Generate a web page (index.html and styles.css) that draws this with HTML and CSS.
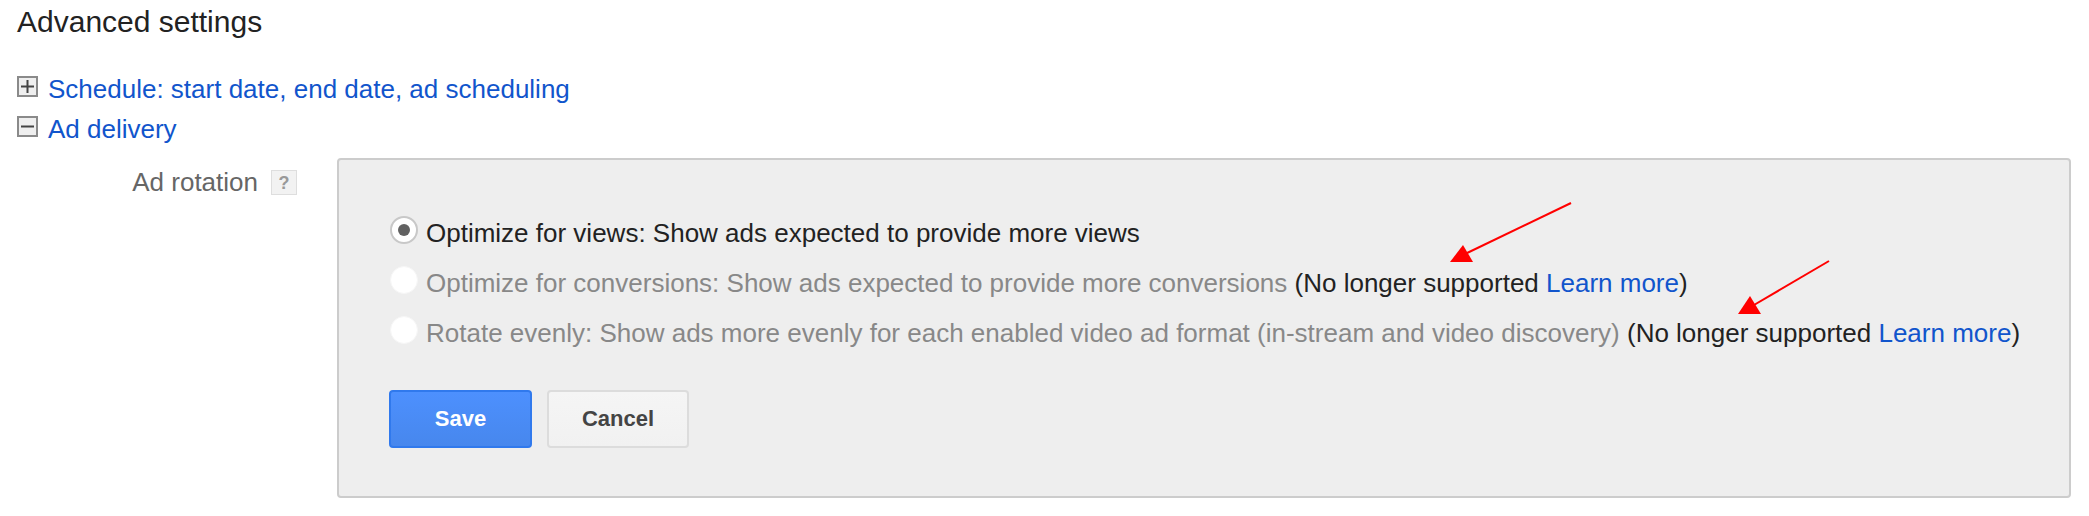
FILE: index.html
```html
<!DOCTYPE html>
<html>
<head>
<meta charset="utf-8">
<link rel="stylesheet" href="styles.css">
</head>
<body>
<div class="page">
  <h1 class="title">Advanced settings</h1>
  <div class="toggle-row">
    <span class="toggle-box"><svg width="21" height="21" viewBox="0 0 21 21"><rect x="1" y="1" width="19" height="19" fill="#efefef" stroke="#8a8a8a" stroke-width="2"/><rect x="4" y="9.5" width="13" height="2" fill="#444"/><rect x="9.5" y="4" width="2" height="13" fill="#444"/></svg></span>
    <a class="link">Schedule: start date, end date, ad scheduling</a>
  </div>
  <div class="toggle-row">
    <span class="toggle-box"><svg width="21" height="21" viewBox="0 0 21 21"><rect x="1" y="1" width="19" height="19" fill="#efefef" stroke="#8a8a8a" stroke-width="2"/><rect x="4" y="9.5" width="13" height="2" fill="#444"/></svg></span>
    <a class="link">Ad delivery</a>
  </div>
  <div class="setting">
    <div class="label-cell">
      <span class="label">Ad rotation</span>
      <span class="help">?</span>
    </div>
    <div class="panel">
      <div class="option">
        <span class="radio checked"><span class="dot"></span></span>
        <span class="opt-text">Optimize for views: Show ads expected to provide more views</span>
      </div>
      <div class="option">
        <span class="radio disabled"></span>
        <span class="opt-text muted">Optimize for conversions: Show ads expected to provide more conversions</span>&nbsp;<span class="opt-text">(No longer supported <a class="link">Learn more</a>)</span>
      </div>
      <div class="option">
        <span class="radio disabled"></span>
        <span class="opt-text muted">Rotate evenly: Show ads more evenly for each enabled video ad format (in-stream and video discovery)</span>&nbsp;<span class="opt-text">(No longer supported <a class="link">Learn more</a>)</span>
      </div>
      <div class="buttons">
        <button class="btn btn-primary">Save</button>
        <button class="btn btn-secondary">Cancel</button>
      </div>
    </div>
  </div>
  <svg class="annotations" width="2089" height="516" viewBox="0 0 2089 516">
    <line x1="1571" y1="203" x2="1465" y2="254" stroke="#ff0000" stroke-width="2"/>
    <polygon points="1450,262 1473,262 1463,245" fill="#ff0000"/>
    <line x1="1829" y1="261" x2="1754" y2="305" stroke="#ff0000" stroke-width="2"/>
    <polygon points="1738,314 1761,314 1750,296" fill="#ff0000"/>
  </svg>
</div>
</body>
</html>
```

FILE: styles.css
```css
html, body {
  margin: 0;
  padding: 0;
  background: #fff;
}

.page {
  position: relative;
  width: 2089px;
  height: 516px;
  box-sizing: border-box;
  padding: 4px 0 0 17px;
  font-family: "Liberation Sans", Arial, sans-serif;
  color: #222;
}

.title {
  margin: 0 0 29px 0;
  font-size: 30px;
  line-height: 36px;
  font-weight: normal;
  color: #222;
}

.toggle-row {
  display: flex;
  align-items: center;
  height: 40px;
  font-size: 26px;
  line-height: 40px;
}

.toggle-box {
  display: flex;
  width: 21px;
  height: 21px;
  margin-right: 10px;
  margin-bottom: 5px;
}

.link {
  color: #1155cc;
  text-decoration: none;
  cursor: pointer;
}

.setting {
  display: flex;
  margin-top: 9px;
}

.label-cell {
  width: 280px;
  display: flex;
  justify-content: flex-end;
  align-items: center;
  padding-top: 9px;
  height: 30px;
}

.label {
  font-size: 26px;
  line-height: 30px;
  color: #666;
}

.help {
  width: 24px;
  height: 23px;
  margin-left: 13px;
  border: 1px solid #dedede;
  background: #f2f2f2;
  color: #999;
  font-size: 18px;
  font-weight: bold;
  line-height: 24px;
  text-align: center;
}

.panel {
  margin-left: 40px;
  width: 1734px;
  height: 340px;
  box-sizing: border-box;
  padding: 48px 50px;
  background: #eeeeee;
  border: 2px solid #cccccc;
  border-radius: 4px;
}

.option {
  display: flex;
  align-items: center;
  height: 50px;
  font-size: 26px;
  line-height: 50px;
  white-space: nowrap;
}

.opt-text {
  color: #222;
}

.opt-text.muted {
  color: #888;
}

.radio {
  display: flex;
  align-items: center;
  justify-content: center;
  box-sizing: border-box;
  width: 28px;
  height: 28px;
  margin-left: 1px;
  margin-right: 8px;
  margin-bottom: 6px;
  border-radius: 50%;
  background: #fff;
  flex: none;
}

.radio.checked {
  border: 2px solid #c8c8c8;
}

.radio.disabled {
  border: 1px solid #f6f6f6;
}

.dot {
  width: 12px;
  height: 12px;
  border-radius: 50%;
  background: #616161;
}

.buttons {
  display: flex;
  gap: 15px;
  margin-top: 32px;
}

.btn {
  box-sizing: border-box;
  height: 58px;
  font-family: "Liberation Sans", Arial, sans-serif;
  font-size: 22px;
  font-weight: bold;
  border-radius: 4px;
  padding: 0;
}

.btn-primary {
  width: 143px;
  color: #fff;
  background: linear-gradient(#4d90fe, #4787ed);
  border: 2px solid #3079ed;
}

.btn-secondary {
  width: 142px;
  color: #444;
  background: linear-gradient(#f5f5f5, #f1f1f1);
  border: 2px solid #dcdcdc;
}

.annotations {
  position: absolute;
  top: 0;
  left: 0;
  pointer-events: none;
}
```
